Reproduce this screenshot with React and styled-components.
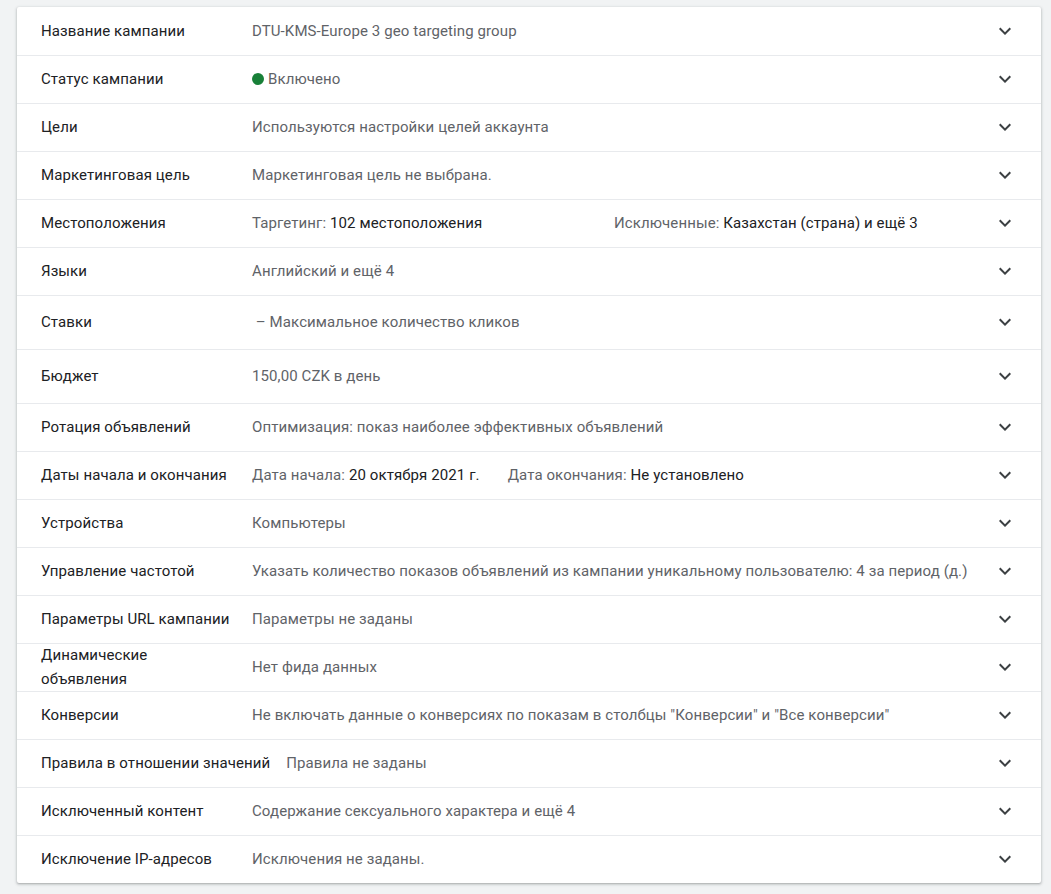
import React from "react";
import styled, { createGlobalStyle } from "styled-components";

const Global = createGlobalStyle`
  html, body { margin: 0; padding: 0; background: #f1f3f4; }
  body { font-family: Roboto, "Noto Sans", Arial, sans-serif; -webkit-font-smoothing: antialiased; }
`;

const Page = styled.div`
  padding: 7px 10px 11px 17px;
`;

const Card = styled.div`
  background: #fff;
  border-radius: 2px;
  box-shadow: 0 1px 2px rgba(60, 64, 67, 0.3), 0 1px 3px 1px rgba(60, 64, 67, 0.12);
`;

const Row = styled.div`
  display: flex;
  align-items: center;
  min-height: ${(p) => (p.$tall ? 54 : 48)}px;
  box-sizing: border-box;
  padding: 0 24px;
  box-shadow: ${(p) => (p.$first ? "none" : "inset 0 1px 0 #e8eaed")};
  font-size: 15px;
  line-height: 24px;
`;

const Label = styled.div`
  flex: 0 0 auto;
  min-width: 195px;
  max-width: ${(p) => (p.$w ? p.$w + "px" : "none")};
  margin-right: 16px;
  color: #202124;
  letter-spacing: 0.1px;
`;

const Value = styled.div`
  flex: 1 1 auto;
  display: flex;
  align-items: center;
  color: #5f6368;
  letter-spacing: 0.1px;
`;

const Part = styled.span`
  min-width: ${(p) => (p.$min ? p.$min + "px" : "0")};
  margin-right: ${(p) => (p.$gap ? p.$gap + "px" : "0")};
`;

const Strong = styled.span`
  color: #202124;
`;

const Dot = styled.span`
  display: inline-block;
  width: 12px;
  height: 12px;
  border-radius: 50%;
  background: #188038;
  margin-right: 4px;
`;

const Chevron = styled.div`
  flex: 0 0 24px;
  width: 24px;
  height: 24px;
  display: flex;
  align-items: center;
  justify-content: center;
  margin-left: 12px;
`;

const ExpandIcon = () => (
  <svg width="24" height="24" viewBox="0 0 24 24">
    <path d="M16.59 8.59L12 13.17 7.41 8.59 6 10l6 6 6-6z" fill="#3c4043" />
  </svg>
);

const rows = [
  { label: "Название кампании", value: "DTU-KMS-Europe 3 geo targeting group" },
  {
    label: "Статус кампании",
    value: (
      <>
        <Dot />
        Включено
      </>
    ),
  },
  { label: "Цели", value: "Используются настройки целей аккаунта" },
  { label: "Маркетинговая цель", value: "Маркетинговая цель не выбрана." },
  {
    label: "Местоположения",
    value: (
      <>
        <Part $min={362}>
          Таргетинг: <Strong>102 местоположения</Strong>
        </Part>
        <Part>
          Исключенные: <Strong>Казахстан (страна) и ещё 3</Strong>
        </Part>
      </>
    ),
  },
  { label: "Языки", value: "Английский и ещё 4" },
  { label: "Ставки", value: "\u00a0– Максимальное количество кликов", tall: true },
  { label: "Бюджет", value: "150,00 CZK в день", tall: true },
  { label: "Ротация объявлений", value: "Оптимизация: показ наиболее эффективных объявлений" },
  {
    label: "Даты начала и окончания",
    value: (
      <>
        <Part $gap={28}>
          Дата начала: <Strong>20 октября 2021 г.</Strong>
        </Part>
        <Part>
          Дата окончания: <Strong>Не установлено</Strong>
        </Part>
      </>
    ),
  },
  { label: "Устройства", value: "Компьютеры" },
  {
    label: "Управление частотой",
    value: "Указать количество показов объявлений из кампании уникальному пользователю: 4 за период (д.)",
  },
  { label: "Параметры URL кампании", value: "Параметры не заданы" },
  { label: "Динамические объявления", value: "Нет фида данных", w: 195 },
  {
    label: "Конверсии",
    value: 'Не включать данные о конверсиях по показам в столбцы "Конверсии" и "Все конверсии"',
  },
  { label: "Правила в отношении значений", value: "Правила не заданы" },
  { label: "Исключенный контент", value: "Содержание сексуального характера и ещё 4" },
  { label: "Исключение IP-адресов", value: "Исключения не заданы." },
];

export default function App() {
  return (
    <>
      <Global />
      <Page>
        <Card>
          {rows.map((r, i) => (
            <Row key={r.label} $first={i === 0} $tall={r.tall}>
              <Label $w={r.w}>{r.label}</Label>
              <Value>{r.value}</Value>
              <Chevron>
                <ExpandIcon />
              </Chevron>
            </Row>
          ))}
        </Card>
      </Page>
    </>
  );
}
